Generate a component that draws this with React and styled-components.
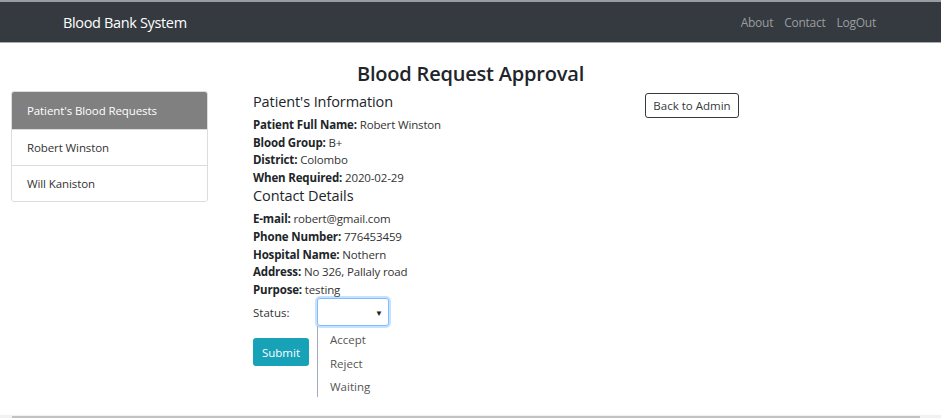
import React from "react";
import styled, { createGlobalStyle } from "styled-components";

const Global = createGlobalStyle`
  html, body { margin: 0; padding: 0; background: #fff; }
  body { font-family: "Open Sans", "Noto Sans", sans-serif; color: #212529; }
  * { box-sizing: border-box; }
`;

const Page = styled.div`
  height: 100vh;
  display: flex;
  flex-direction: column;
  overflow: hidden;
`;

const Navbar = styled.nav`
  height: 43px;
  flex: none;
  background: #343a40;
  border-top: 2px solid #9a9c9f;
  border-bottom: 1px solid #a9abad;
  display: flex;
  align-items: center;
  justify-content: space-between;
  padding: 0 65px 0 63px;
`;

const Brand = styled.span`
  color: #fff;
  font-size: 14.5px;
  letter-spacing: -0.35px;
`;

const NavLinks = styled.div`
  display: flex;
  gap: 11px;
`;

const NavLink = styled.span`
  color: #9a9d9f;
  font-size: 12px;
  letter-spacing: -0.25px;
`;

const Main = styled.main`
  flex: 1;
  display: flex;
  flex-direction: column;
`;

const Title = styled.h1`
  margin: 19px 0 5px;
  font-size: 20px;
  line-height: 24px;
  font-weight: 600;
  text-align: center;
  letter-spacing: -0.2px;
  color: #212529;
`;

const Row = styled.div`
  display: flex;
  align-items: flex-start;
  padding-left: 11px;
`;

const Sidebar = styled.div`
  width: 197px;
  border: 1px solid #dcdcdc;
  border-radius: 3px;
  overflow: hidden;
  display: flex;
  flex-direction: column;
`;

const ListItem = styled.div`
  height: ${(p) => (p.$active ? 37 : 36)}px;
  display: flex;
  align-items: center;
  padding-left: 15px;
  font-size: 11.5px;
  letter-spacing: -0.1px;
  color: ${(p) => (p.$active ? "#fff" : "#333")};
  background: ${(p) => (p.$active ? "#808080" : "#fff")};
  border-top: ${(p) => (p.$first ? "none" : "1px solid #dcdcdc")};
`;

const Content = styled.div`
  width: 392px;
  margin-left: 45px;
  padding-top: 2px;
`;

const Heading = styled.h2`
  margin: ${(p) => (p.$spaced ? "1px" : "0")} 0 5px;
  font-size: 14.5px;
  line-height: 18px;
  font-weight: 500;
  letter-spacing: -0.1px;
  color: #212529;
`;

const Field = styled.div`
  font-size: 11.5px;
  line-height: 17.6px;
  letter-spacing: -0.15px;
  color: #333;
  b { color: #212529; font-weight: 700; }
`;

const StatusRow = styled.div`
  display: flex;
  align-items: center;
  height: 28px;
`;

const StatusLabel = styled.span`
  width: 64px;
  font-size: 11.5px;
  color: #333;
`;

const SelectWrap = styled.div`
  position: relative;
`;

const SelectBox = styled.div`
  width: 72px;
  height: 28px;
  border: 1px solid #80bdff;
  border-radius: 3px;
  box-shadow: 0 0 0 2px rgba(0, 123, 255, 0.22);
  background: #fff;
  display: flex;
  align-items: center;
  justify-content: flex-end;
  padding-right: 5px;
  font-size: 8px;
  color: #222;
`;

const Options = styled.div`
  position: absolute;
  left: 0;
  top: 28px;
  width: 72px;
  height: 71px;
  border-left: 1px solid #a3abbd;
  padding: 2px 0 0 12px;
  display: flex;
  flex-direction: column;
`;

const Option = styled.span`
  height: 23.5px;
  line-height: 23.5px;
  font-size: 11.5px;
  color: #555;
`;

const SubmitButton = styled.button`
  margin-top: 12px;
  width: 56px;
  height: 28px;
  border: none;
  border-radius: 3px;
  background: #17a2b8;
  color: #fff;
  font-family: inherit;
  font-size: 11.5px;
  padding: 0;
`;

const BackButton = styled.button`
  margin-top: 2px;
  width: 94px;
  height: 25px;
  border: 1px solid #343a40;
  border-radius: 3px;
  background: #fff;
  color: #343a40;
  font-family: inherit;
  font-size: 11.5px;
  padding: 0;
`;

const ScrollTrack = styled.div`
  flex: none;
  height: 3px;
  background: #f1f1f1;
  padding: 0 21px 0 12px;
  display: flex;
`;

const ScrollThumb = styled.div`
  flex: 1;
  background: #c2c2c2;
  margin-top: 1px;
`;

const patient = [
  ["Patient Full Name:", "Robert Winston"],
  ["Blood Group:", "B+"],
  ["District:", "Colombo"],
  ["When Required:", "2020-02-29"],
];

const contact = [
  ["E-mail:", "robert@gmail.com"],
  ["Phone Number:", "776453459"],
  ["Hospital Name:", "Nothern"],
  ["Address:", "No 326, Pallaly road"],
  ["Purpose:", "testing"],
];

export default function App() {
  return (
    <Page>
      <Global />
      <Navbar>
        <Brand>Blood Bank System</Brand>
        <NavLinks>
          <NavLink>About</NavLink>
          <NavLink>Contact</NavLink>
          <NavLink>LogOut</NavLink>
        </NavLinks>
      </Navbar>
      <Main>
        <Title>Blood Request Approval</Title>
        <Row>
          <Sidebar>
            <ListItem $active $first>Patient's Blood Requests</ListItem>
            <ListItem>Robert Winston</ListItem>
            <ListItem>Will Kaniston</ListItem>
          </Sidebar>
          <Content>
            <Heading>Patient's Information</Heading>
            {patient.map(([k, v]) => (
              <Field key={k}>
                <b>{k}</b> {v}
              </Field>
            ))}
            <Heading $spaced>Contact Details</Heading>
            {contact.map(([k, v]) => (
              <Field key={k}>
                <b>{k}</b> {v}
              </Field>
            ))}
            <StatusRow>
              <StatusLabel>Status:</StatusLabel>
              <SelectWrap>
                <SelectBox>▼</SelectBox>
                <Options>
                  <Option>Accept</Option>
                  <Option>Reject</Option>
                  <Option>Waiting</Option>
                </Options>
              </SelectWrap>
            </StatusRow>
            <SubmitButton>Submit</SubmitButton>
          </Content>
          <BackButton>Back to Admin</BackButton>
        </Row>
      </Main>
      <ScrollTrack>
        <ScrollThumb />
      </ScrollTrack>
    </Page>
  );
}
